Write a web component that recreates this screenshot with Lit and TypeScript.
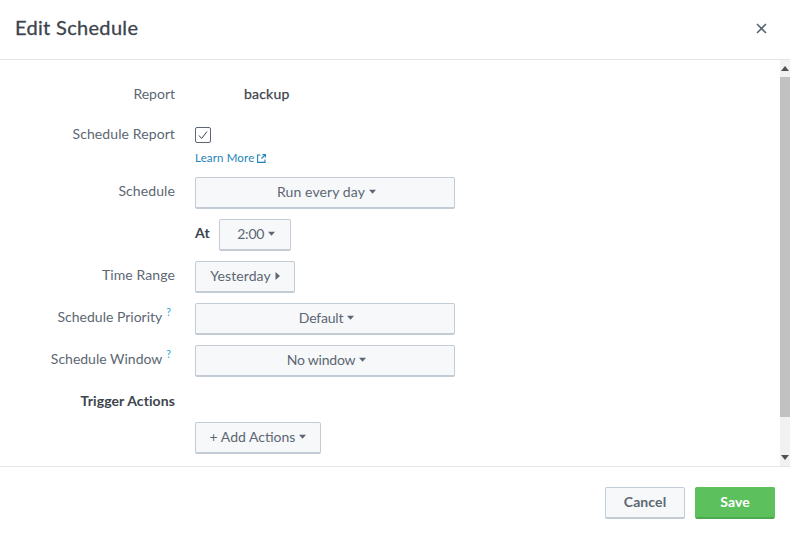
import { LitElement, html, css } from "lit";
import { customElement } from "lit/decorators.js";

const caret = html`<svg class="caret" width="7" height="5" viewBox="0 0 8 5"><path d="M0 0.5h8L4 5z" fill="currentColor"/></svg>`;
const caretRight = html`<svg class="caret" width="5" height="8" viewBox="0 0 5 8"><path d="M0.5 0v8L5 4z" fill="currentColor"/></svg>`;

@customElement("app-root")
export class AppRoot extends LitElement {
  static styles = css`
    :host {
      display: flex;
      flex-direction: column;
      width: 790px;
      height: 535px;
      background: #fff;
      font-family: Lato, "Open Sans", "Liberation Sans", sans-serif;
      font-size: 14px;
      letter-spacing: 0.1px;
      color: #5c6773;
      overflow: hidden;
    }
    .head {
      height: 54px;
      flex: none;
      display: flex;
      align-items: center;
      justify-content: space-between;
      padding: 0 23px 5px 15px;
      border-bottom: 1px solid #e1e6eb;
    }
    h1 {
      margin: 0;
      font-size: 20px;
      font-weight: 400;
      color: #3c444d;
      letter-spacing: 0.32px;
      -webkit-text-stroke: 0.3px #3c444d;
    }
    .close { display: block; color: #5c6773; margin-top: 2px; }
    .main { flex: 1; display: flex; min-height: 0; }
    .form {
      flex: 1;
      padding-top: 24px;
      display: flex;
      flex-direction: column;
    }
    .row { display: flex; align-items: flex-start; margin-bottom: 10px; }
    .row.report { height: 20px; margin-bottom: 23px; }
    .row.sched { margin-bottom: 12px; }
    .row.win { margin-bottom: 14px; }
    .row.trig { margin-bottom: 11px; }
    .label {
      width: 175px;
      flex: none;
      margin-right: 20px;
      text-align: right;
      line-height: 28px;
      color: #5c6773;
      white-space: nowrap;
    }
    .label.tight { line-height: 14px; }
    .label.mid { line-height: 20px; letter-spacing: 0; }
    .label.hint { letter-spacing: 0; }
    .label.b { font-weight: 700; color: #3c444d; line-height: 20px; }
    .q { font-size: 10.5px; line-height: 0; color: #2b9fd8; vertical-align: 6px; margin: 0 4px 0 4px; }
    .static {
      color: #3c444d;
      line-height: 20px;
      margin-left: 49px;
      -webkit-text-stroke: 0.25px #3c444d;
      letter-spacing: 0.2px;
    }
    .btn {
      box-sizing: border-box;
      height: 32px;
      display: inline-flex;
      align-items: center;
      justify-content: center;
      gap: 4px;
      padding: 0 14px 2px;
      background: #f7f8fa;
      border: 1px solid #c3cbd4;
      border-bottom-width: 2px;
      border-radius: 2px;
      color: #5c6773;
      font-size: 14px;
      white-space: nowrap;
    }
    .wide { width: 260px; padding-left: 17px; }
    .snug { letter-spacing: -0.2px; }
    .time { width: 72px; padding-left: 17px; }
    .range { width: 100px; }
    .add { width: 126px; letter-spacing: 0; padding: 0 0 2px; }
    .check {
      box-sizing: border-box;
      width: 16px;
      height: 16px;
      border: 1px solid #5c6773;
      border-radius: 2px;
      display: flex;
      align-items: center;
      justify-content: center;
      color: #3c444d;
    }
    .learn {
      display: flex;
      align-items: center;
      gap: 3px;
      font-size: 11.5px;
      color: #1e83b8;
      line-height: 14px;
      margin-top: 8px;
      letter-spacing: 0.15px;
    }
    .at { font-weight: 700; color: #3c444d; margin-right: 9px; line-height: 28px; }
    .ctrl { display: flex; align-items: flex-start; }
    .sb {
      width: 10px;
      flex: none;
      background: #f1f1f1;
      display: flex;
      flex-direction: column;
      align-items: center;
      justify-content: space-between;
    }
    .arr { height: 17px; display: flex; align-items: center; color: #505050; }
    .thumb { width: 10px; flex: 1; background: #c1c1c1; margin-bottom: 32px; }
    .foot {
      box-sizing: border-box;
      height: 69px;
      flex: none;
      border-top: 1px solid #e1e6eb;
      display: flex;
      align-items: flex-start;
      justify-content: flex-end;
      gap: 10px;
      padding: 20px 15px 0 0;
    }
    .foot .btn { width: 80px; font-weight: 700; padding: 0 0 2px; }
    .foot .btn.save {
      background: #5cc05c;
      border-color: #5cc05c;
      border-bottom-color: #4ea94e;
      color: #fff;
    }
  `;

  render() {
    return html`
      <div class="head">
        <h1>Edit Schedule</h1>
        <svg class="close" width="11" height="11" viewBox="0 0 11 11"><path d="M1 1l9 9M10 1l-9 9" stroke="currentColor" stroke-width="1.6" fill="none"/></svg>
      </div>
      <div class="main">
        <div class="form">
          <div class="row report"><div class="label mid">Report</div><div class="static">backup</div></div>
          <div class="row sched">
            <div class="label tight">Schedule Report</div>
            <div>
              <div class="check"><svg width="12" height="12" viewBox="0 0 12 12"><path d="M2 6.5L4.6 9.5L10 2.5" stroke="currentColor" stroke-width="1" fill="none"/></svg></div>
              <div class="learn">Learn More <svg width="9" height="9" viewBox="0 0 9 9"><path d="M3.5 1H.6v7.4H8V5.5M4.5 4.5L8.4.6M5.5.6h2.9v2.9" stroke="currentColor" stroke-width="1.1" fill="none"/></svg></div>
            </div>
          </div>
          <div class="row"><div class="label">Schedule</div><div class="btn wide">Run every day ${caret}</div></div>
          <div class="row"><div class="label"></div><div class="ctrl"><span class="at">At</span><div class="btn time snug">2:00 ${caret}</div></div></div>
          <div class="row"><div class="label">Time Range</div><div class="btn range">Yesterday ${caretRight}</div></div>
          <div class="row"><div class="label hint">Schedule Priority<span class="q">?</span></div><div class="btn wide snug">Default ${caret}</div></div>
          <div class="row win"><div class="label hint">Schedule Window<span class="q">?</span></div><div class="btn wide snug">No window ${caret}</div></div>
          <div class="row trig"><div class="label b">Trigger Actions</div></div>
          <div class="row"><div class="label"></div><div class="btn add">+ Add Actions ${caret}</div></div>
        </div>
        <div class="sb">
          <div class="arr"><svg width="8" height="5" viewBox="0 0 8 5"><path d="M0 5h8L4 0z" fill="currentColor"/></svg></div>
          <div class="thumb"></div>
          <div class="arr"><svg width="8" height="5" viewBox="0 0 8 5"><path d="M0 0h8L4 5z" fill="currentColor"/></svg></div>
        </div>
      </div>
      <div class="foot">
        <div class="btn">Cancel</div>
        <div class="btn save">Save</div>
      </div>
    `;
  }
}
